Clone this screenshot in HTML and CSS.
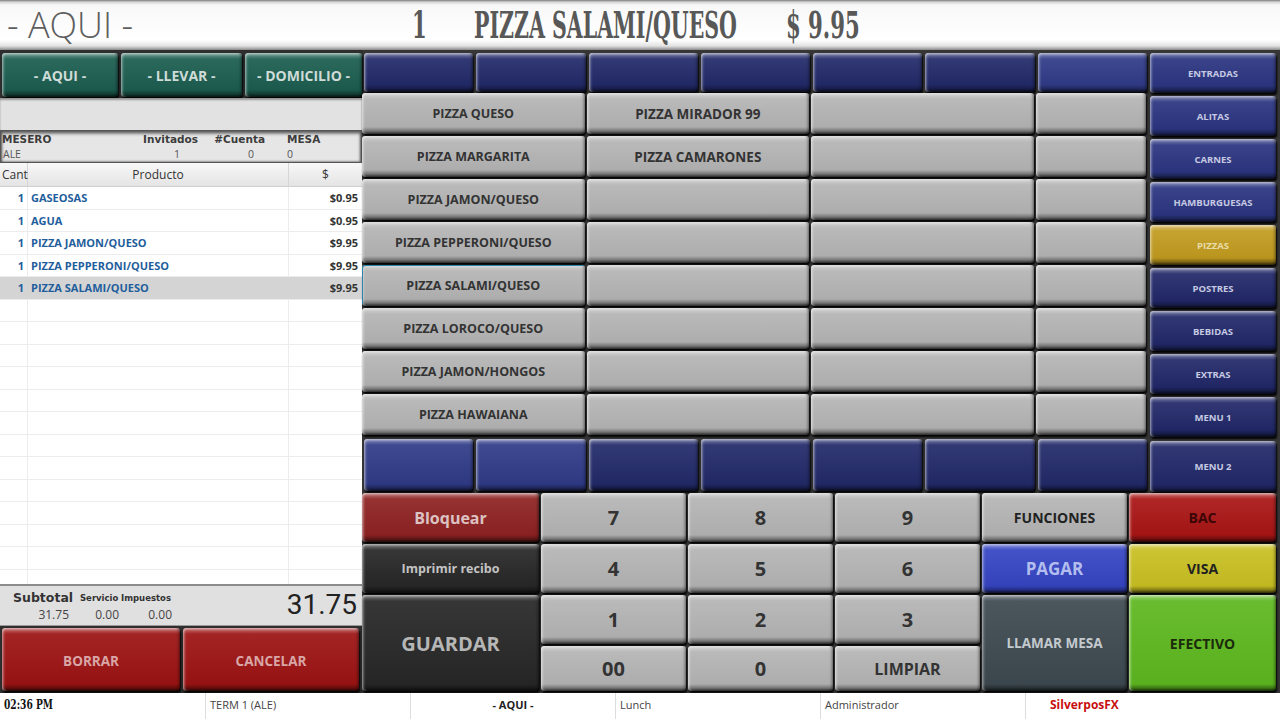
FILE: index.html
```html
<!DOCTYPE html>
<html lang="es">
<head>
<meta charset="utf-8">
<title>POS</title>
<link rel="stylesheet" href="styles.css">
</head>
<body>
<div class="app">
  <header class="top">
    <div class="place">- AQUI -</div>
    <div><span class="hd">1</span></div>
    <div><span class="hd nm">PIZZA SALAMI/QUESO</span></div>
    <div><span class="hd">$ 9.95</span></div>
  </header>

  <main class="main">
    <section class="left">
      <div class="modes">
        <div class="btn teal">- AQUI -</div>
        <div class="btn teal">- LLEVAR -</div>
        <div class="btn teal">- DOMICILIO -</div>
      </div>
      <div class="blank"></div>
      <div class="info">
        <div class="ih">MESERO</div>
        <div class="ih r">Invitados</div>
        <div class="ih r">#Cuenta</div>
        <div class="ih l">MESA</div>
        <div class="iv">ALE</div>
        <div class="iv r1">1</div>
        <div class="iv r2">0</div>
        <div class="iv l">0</div>
      </div>
      <div class="thead">
        <div class="c-q">Cant</div>
        <div class="c-n">Producto</div>
        <div class="c-p">$</div>
      </div>
      <div class="tbody">
        <div class="row"><div class="c-q">1</div><div class="c-n">GASEOSAS</div><div class="c-p">$0.95</div></div>
        <div class="row"><div class="c-q">1</div><div class="c-n">AGUA</div><div class="c-p">$0.95</div></div>
        <div class="row"><div class="c-q">1</div><div class="c-n">PIZZA JAMON/QUESO</div><div class="c-p">$9.95</div></div>
        <div class="row"><div class="c-q">1</div><div class="c-n">PIZZA PEPPERONI/QUESO</div><div class="c-p">$9.95</div></div>
        <div class="row sel"><div class="c-q">1</div><div class="c-n">PIZZA SALAMI/QUESO</div><div class="c-p">$9.95</div></div>
        <div class="row"><div class="c-q"></div><div class="c-n"></div><div class="c-p"></div></div>
        <div class="row"><div class="c-q"></div><div class="c-n"></div><div class="c-p"></div></div>
        <div class="row"><div class="c-q"></div><div class="c-n"></div><div class="c-p"></div></div>
        <div class="row"><div class="c-q"></div><div class="c-n"></div><div class="c-p"></div></div>
        <div class="row"><div class="c-q"></div><div class="c-n"></div><div class="c-p"></div></div>
        <div class="row"><div class="c-q"></div><div class="c-n"></div><div class="c-p"></div></div>
        <div class="row"><div class="c-q"></div><div class="c-n"></div><div class="c-p"></div></div>
        <div class="row"><div class="c-q"></div><div class="c-n"></div><div class="c-p"></div></div>
        <div class="row"><div class="c-q"></div><div class="c-n"></div><div class="c-p"></div></div>
        <div class="row"><div class="c-q"></div><div class="c-n"></div><div class="c-p"></div></div>
        <div class="row"><div class="c-q"></div><div class="c-n"></div><div class="c-p"></div></div>
        <div class="row"><div class="c-q"></div><div class="c-n"></div><div class="c-p"></div></div>
        <div class="row"><div class="c-q"></div><div class="c-n"></div><div class="c-p"></div></div>
      </div>
      <div class="totals">
        <div class="tl t1">Subtotal</div>
        <div class="tl t2">Servicio</div>
        <div class="tl t3">Impuestos</div>
        <div class="big">31.75</div>
        <div class="tv">31.75</div>
        <div class="tv">0.00</div>
        <div class="tv">0.00</div>
      </div>
      <div class="actions">
        <div class="btn red">BORRAR</div>
        <div class="btn red">CANCELAR</div>
      </div>
    </section>

    <section class="right">
      <div class="menu">
        <div class="btn nav t"></div>
        <div class="btn nav t"></div>
        <div class="btn nav t"></div>
        <div class="btn nav t"></div>
        <div class="btn nav t"></div>
        <div class="btn nav t"></div>
        <div class="btn nav lt t"></div>
        <div class="btn cat c0">ENTRADAS</div>

        <div class="btn prod w2 a">PIZZA QUESO</div>
        <div class="btn prod w2 b">PIZZA MIRADOR 99</div>
        <div class="btn prod w2"></div>
        <div class="btn prod"></div>
        <div class="btn cat">ALITAS</div>

        <div class="btn prod w2 a">PIZZA MARGARITA</div>
        <div class="btn prod w2 b">PIZZA CAMARONES</div>
        <div class="btn prod w2"></div>
        <div class="btn prod"></div>
        <div class="btn cat">CARNES</div>

        <div class="btn prod w2 a">PIZZA JAMON/QUESO</div>
        <div class="btn prod w2"></div>
        <div class="btn prod w2"></div>
        <div class="btn prod"></div>
        <div class="btn cat">HAMBURGUESAS</div>

        <div class="btn prod w2 a">PIZZA PEPPERONI/QUESO</div>
        <div class="btn prod w2"></div>
        <div class="btn prod w2"></div>
        <div class="btn prod"></div>
        <div class="btn cat gold">PIZZAS</div>

        <div class="btn prod w2 a on">PIZZA SALAMI/QUESO</div>
        <div class="btn prod w2"></div>
        <div class="btn prod w2"></div>
        <div class="btn prod"></div>
        <div class="btn cat dk">POSTRES</div>

        <div class="btn prod w2 a">PIZZA LOROCO/QUESO</div>
        <div class="btn prod w2"></div>
        <div class="btn prod w2"></div>
        <div class="btn prod"></div>
        <div class="btn cat dk">BEBIDAS</div>

        <div class="btn prod w2 a">PIZZA JAMON/HONGOS</div>
        <div class="btn prod w2"></div>
        <div class="btn prod w2"></div>
        <div class="btn prod"></div>
        <div class="btn cat dk">EXTRAS</div>

        <div class="btn prod w2 a">PIZZA HAWAIANA</div>
        <div class="btn prod w2"></div>
        <div class="btn prod w2"></div>
        <div class="btn prod"></div>
        <div class="btn cat dk">MENU 1</div>

        <div class="btn nav lt bt"></div>
        <div class="btn nav lt bt"></div>
        <div class="btn nav bt"></div>
        <div class="btn nav bt"></div>
        <div class="btn nav bt"></div>
        <div class="btn nav bt"></div>
        <div class="btn nav bt"></div>
        <div class="btn cat dk cl">MENU 2</div>
      </div>

      <div class="keypad">
        <div class="btn k bloq">Bloquear</div>
        <div class="btn k num">7</div>
        <div class="btn k num">8</div>
        <div class="btn k num">9</div>
        <div class="btn k func">FUNCIONES</div>
        <div class="btn k bac">BAC</div>

        <div class="btn k dark imp">Imprimir recibo</div>
        <div class="btn k num">4</div>
        <div class="btn k num">5</div>
        <div class="btn k num">6</div>
        <div class="btn k pagar">PAGAR</div>
        <div class="btn k visa">VISA</div>

        <div class="btn k dark guardar">GUARDAR</div>
        <div class="btn k num">1</div>
        <div class="btn k num">2</div>
        <div class="btn k num">3</div>
        <div class="btn k llamar">LLAMAR MESA</div>
        <div class="btn k efectivo">EFECTIVO</div>

        <div class="btn k num">00</div>
        <div class="btn k num">0</div>
        <div class="btn k num limpiar">LIMPIAR</div>
      </div>
    </section>
  </main>

  <footer class="status">
    <div class="s time"><span class="hd sm">02:36 PM</span></div>
    <div class="s">TERM 1 (ALE)</div>
    <div class="s mid">- AQUI -</div>
    <div class="s">Lunch</div>
    <div class="s">Administrador</div>
    <div class="s brand">SilverposFX</div>
  </footer>
</div>
</body>
</html>
```

FILE: styles.css
```css
* { box-sizing: border-box; margin: 0; padding: 0; }
html, body { width: 1280px; height: 719px; overflow: hidden; }
body { font-family: "Open Sans", "Liberation Sans", sans-serif; background: #333; }

.app { display: flex; flex-direction: column; height: 719px; }

/* header */
.top {
  height: 50px; flex: none;
  display: grid; grid-template-columns: 412px 62px 312px 1fr; align-items: center;
  background: linear-gradient(#7c7c7c 0, #d4d4d4 2px, #f8f8f8 5px, #fff 40px, #e2e2e2 46px, #8a8a8a 50px);
}
.place { padding-left: 7px; font-size: 36px; font-weight: 300; color: #5e5e5e; line-height: 1; white-space: nowrap; }
.hd {
  font-family: "DejaVu Serif Condensed", "DejaVu Serif", serif; font-weight: bold;
  font-size: 38px; color: #585858; display: inline-block; white-space: nowrap; line-height: 1;
  transform: scaleX(.62); transform-origin: 0 50%;
}
.hd.nm { transform: scaleX(.6); }

/* main */
.main { flex: 1; min-height: 0; display: flex; background: #363636; }

.left { width: 362px; flex: none; display: flex; flex-direction: column; }
.modes {
  height: 48px; flex: none; padding: 3px 0 1px 2px;
  display: grid; grid-template-columns: 116px 121px 1fr; column-gap: 3px; background: #2e2e2e;
}
.blank { height: 32px; flex: none; background: #e2e2e2; box-shadow: inset 0 2px 2px rgba(0,0,0,.35); }

.info {
  height: 33px; flex: none; background: #e6e6e6;
  border: 1px solid #555; box-shadow: inset 0 2px 3px 1px rgba(0,0,0,.45), inset 0 0 2px 1px rgba(0,0,0,.3);
  display: grid; grid-template-columns: 137px 62px 67px 1fr; grid-template-rows: 15px 14px;
  padding-top: 1px;
}
.ih { font-family: "DejaVu Sans", sans-serif; font-weight: bold; font-size: 10.5px; color: #3c3c3c; padding-left: 1px; line-height: 15px; }
.ih.r { text-align: right; padding-right: 2px; }
.ih.l { padding-left: 20px; }
.iv { font-size: 10.5px; color: #555; padding-left: 2px; line-height: 14px; }
.iv.r1 { text-align: right; padding-right: 20px; }
.iv.r2 { text-align: right; padding-right: 13px; }
.iv.l { padding-left: 20px; }

.thead {
  height: 24px; flex: none; display: grid; grid-template-columns: 28px 261px 1fr;
  background: linear-gradient(#f8f8f8, #e4e4e4); border-bottom: 1px solid #d0d0d0;
  font-size: 12px; color: #333; line-height: 23px;
}
.thead > div { border-right: 1px solid #d6d6d6; text-align: center; }
.thead > div:last-child { border-right: 0; }
.thead .c-q { text-align: left; padding-left: 2px; }

.tbody { flex: 1; min-height: 0; overflow: hidden; background: #fff; }
.row {
  height: 22.5px; display: grid; grid-template-columns: 28px 261px 1fr;
  border-bottom: 1px solid #ececec;
  font-weight: 700; font-size: 11px; color: #1f5e9c; line-height: 22px;
}
.row > div { border-right: 1px solid #ececec; white-space: nowrap; overflow: hidden; }
.row > div:last-child { border-right: 0; }
.row .c-q { text-align: right; padding-right: 3px; }
.row .c-n { padding-left: 3px; }
.row .c-p { text-align: right; padding-right: 4px; color: #333; }
.row.sel { background: #d4d4d4; }
.row.sel > div { border-right-color: #d4d4d4; }

.totals {
  height: 42px; flex: none; background: #e0e0e0;
  border-top: 2px solid #8c8c8c; border-bottom: 1px solid #999;
  display: grid; grid-template-columns: 72px 50px 53px 1fr; grid-template-rows: 19px 19px;
}
.tl { font-family: "DejaVu Sans", sans-serif; font-weight: bold; color: #333; align-self: end; }
.t1 { font-size: 12.5px; padding-left: 13px; }
.t2, .t3 { font-size: 8.5px; padding-bottom: 2px; }
.t2 { padding-left: 8px; }
.t3 { padding-left: 0; margin-left: -1px; }
.tv { font-size: 12px; color: #444; text-align: right; padding-right: 3px; line-height: 19px; }
.big { grid-row: 1 / 3; grid-column: 4; text-align: right; padding-right: 5px; font-family: Roboto, sans-serif; font-size: 28px; color: #222; line-height: 38px; }

.actions {
  height: 67px; flex: none; background: #2e2e2e;
  display: grid; grid-template-columns: 178px 1fr; column-gap: 3px; padding: 2px 3px 2px 2px;
}

/* right */
.right { flex: 1; display: flex; flex-direction: column; min-width: 0; }
.menu {
  height: 443px; flex: none; display: grid;
  grid-template-columns: repeat(7, 1fr) 132px;
  grid-template-rows: 43px repeat(8, 43px) 56px;
}
.keypad {
  height: 200px; flex: none; display: grid;
  grid-template-columns: 179px 147px 147px 147px 147px 1fr;
  grid-template-rows: 51px 51px 51px 47px;
}

/* buttons */
.btn {
  --c: #b4b4b4;
  display: flex; align-items: center; justify-content: center; text-align: center;
  border-radius: 3px; font-weight: 700; white-space: nowrap; overflow: hidden;
  background-color: var(--c);
  background-image: linear-gradient(180deg, rgba(255,255,255,.68) 0, rgba(255,255,255,.25) 3px, rgba(255,255,255,.07) 6px, rgba(0,0,0,.04) calc(100% - 7px), rgba(0,0,0,.35) calc(100% - 3px), rgba(0,0,0,.8) 100%);
  box-shadow: inset 3px 0 3px -2px rgba(255,255,255,.65), inset -3px 0 3px -2px rgba(0,0,0,.5), 1px 2px 2px rgba(0,0,0,.95);
}
.teal { --c: #1b5d4f; color: #cfdcd8; font-size: 14px; }
.red { --c: #9c1313; color: #d8a6a6; font-size: 13.5px; padding-top: 2px; }

.nav { --c: #222a69; }
.nav.lt { --c: #2f3b87; }
.nav.t { margin: 3px 1px 1px 2px; }
.nav.bt { margin: 2px 1px 2px 2px; }

.prod { margin: 0 2px 2px 0; color: #333; font-size: 12.5px; }
.prod.w2 { grid-column: span 2; }
.prod.b { font-size: 13.5px; }
.prod.on { box-shadow: inset 1px 1px 0 #2b86ad, inset 3px 0 3px -2px rgba(255,255,255,.55), inset -3px 0 3px -2px rgba(0,0,0,.45), 1px 2px 2px rgba(0,0,0,.9); }

.cat { --c: #2b3580; margin: 3px 4px 0 2px; color: #c6c9e2; font-size: 9.5px; }
.cat.c0 { margin: 3px 4px 0 2px; }
.cat.dk { --c: #212868; }
.cat.gold { --c: #c19b1f; color: #e8dca8; }
.cat.cl { margin: 4px 4px 1px 2px; }

.k { margin: 0 2px 2px 0; }
.num { color: #333; font-size: 20px; }
.limpiar { font-size: 16px; }
.bloq { --c: #8e2222; color: #dcc2c2; font-size: 16px; }
.dark { --c: #272727; color: #c4c4c4; }
.imp { font-size: 12.5px; }
.guardar { grid-row: span 2; font-size: 20px; color: #b6b6b6; }
.func { color: #222; font-size: 14px; }
.bac { --c: #a91515; color: #3c0606; font-size: 14px; margin-right: 4px; }
.pagar { --c: #3545c2; color: #b3bdee; font-size: 17px; }
.visa { --c: #c8bf22; color: #222; font-size: 14px; margin-right: 4px; }
.llamar { --c: #3d4950; color: #c4cace; font-size: 13.5px; grid-row: span 2; }
.efectivo { --c: #5db71f; color: #1b2a0c; font-size: 14px; grid-row: span 2; margin-right: 4px; }

/* status */
.status {
  height: 26px; flex: none; background: #fff;
  display: grid; grid-template-columns: 205px 205px 205px 205px 205px 1fr;
  font-size: 11px; color: #444;
}
.s { border-left: 1px solid #ddd; padding: 4px 0 0 4px; white-space: nowrap; line-height: 16px; }
.s:first-child { border-left: 0; }
.hd.sm { font-size: 13px; color: #111; transform: scaleX(.78); }
.time { padding-left: 4px; }
.mid { text-align: center; font-weight: 700; color: #222; padding-left: 0; }
.brand { color: #c80f0f; font-weight: 700; font-size: 12px; padding-left: 24px; }
```
